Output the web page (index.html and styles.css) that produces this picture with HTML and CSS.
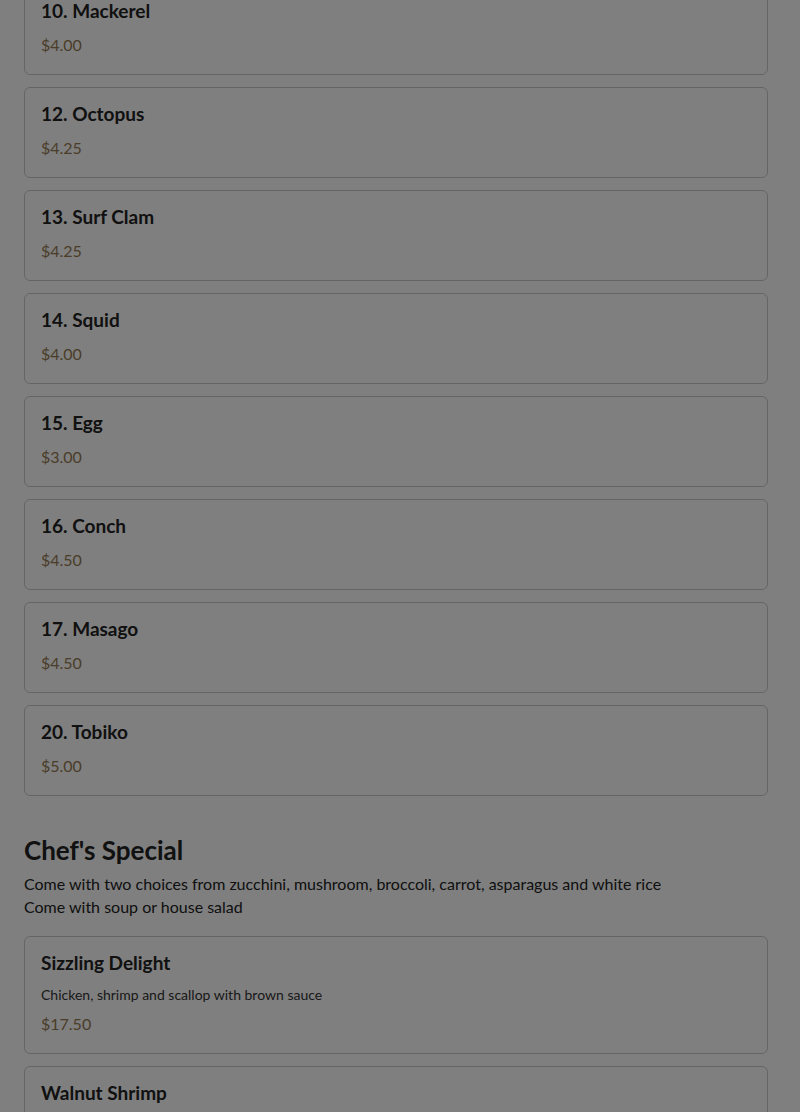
FILE: index.html
```html
<!DOCTYPE html>
<html lang="en">
<head>
<meta charset="utf-8">
<title>Menu</title>
<link rel="stylesheet" href="styles.css">
</head>
<body>
<main class="page">
  <section class="section section-first">
    <div class="card"><h3 class="item-name">10. Mackerel</h3><p class="price">$4.00</p></div>
    <div class="card"><h3 class="item-name">12. Octopus</h3><p class="price">$4.25</p></div>
    <div class="card"><h3 class="item-name">13. Surf Clam</h3><p class="price">$4.25</p></div>
    <div class="card"><h3 class="item-name">14. Squid</h3><p class="price">$4.00</p></div>
    <div class="card"><h3 class="item-name">15. Egg</h3><p class="price">$3.00</p></div>
    <div class="card"><h3 class="item-name">16. Conch</h3><p class="price">$4.50</p></div>
    <div class="card"><h3 class="item-name">17. Masago</h3><p class="price">$4.50</p></div>
    <div class="card"><h3 class="item-name">20. Tobiko</h3><p class="price">$5.00</p></div>
  </section>
  <section class="section">
    <h2 class="section-title">Chef's Special</h2>
    <div class="section-desc">
      <p>Come with two choices from zucchini, mushroom, broccoli, carrot, asparagus and white rice</p>
      <p>Come with soup or house salad</p>
    </div>
    <div class="card"><h3 class="item-name">Sizzling Delight</h3><p class="item-desc">Chicken, shrimp and scallop with brown sauce</p><p class="price">$17.50</p></div>
    <div class="card"><h3 class="item-name">Walnut Shrimp</h3><p class="item-desc">Shrimp with honey walnut sauce</p><p class="price">$16.50</p></div>
  </section>
</main>
<div class="backdrop"></div>
</body>
</html>
```

FILE: styles.css
```css
html, body {
  margin: 0;
  padding: 0;
  background: #ffffff;
  height: 1112px;
  overflow: hidden;
}
body {
  font-family: Lato, "Open Sans", sans-serif;
  color: #222222;
}
.page {
  padding: 0 32px 0 24px;
}
.section {
  display: flex;
  flex-direction: column;
  gap: 12px;
  margin-bottom: 39px;
}
.section-first {
  margin-top: -16px;
}
.card {
  border: 1px solid #cbcbcb;
  border-radius: 6px;
  padding: 14px 16px 17px;
  background: #ffffff;
}
.item-name {
  margin: 0 0 10px;
  font-size: 19px;
  line-height: 24px;
  font-weight: 700;
  color: #222222;
}
.price {
  margin: 0;
  font-size: 16px;
  line-height: 24px;
  color: #957a52;
}
.item-desc {
  margin: 0 0 7px;
  font-size: 14px;
  line-height: 20px;
  color: #333333;
}
.section-title {
  margin: 0 0 -6px;
  font-size: 26px;
  line-height: 31px;
  font-weight: 700;
}
.section-desc {
  margin-bottom: 6px;
}
.section-desc p {
  margin: 0;
  font-size: 16px;
  line-height: 23px;
  color: #222222;
}
.backdrop {
  position: fixed;
  inset: 0;
  background: rgba(0, 0, 0, 0.5);
}
```
